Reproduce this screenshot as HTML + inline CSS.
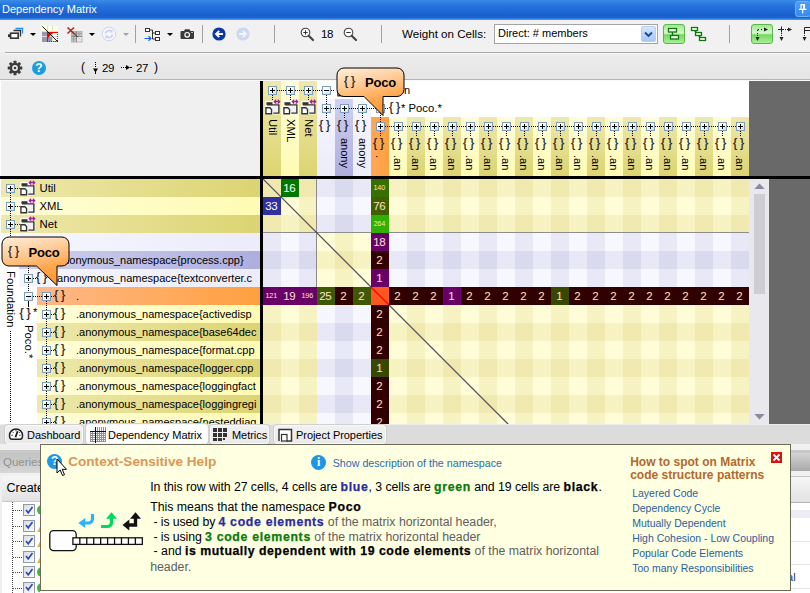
<!DOCTYPE html>
<html><head><meta charset="utf-8"><title>Dependency Matrix</title>
<style>
html,body{margin:0;padding:0;}
body{width:810px;height:593px;overflow:hidden;position:relative;background:#f0f0f0;font-family:"Liberation Sans",sans-serif;font-size:12px;color:#000;}
.abs{position:absolute;}
div,span,svg{box-sizing:border-box;}
#title{position:absolute;left:0;top:0;width:810px;height:20px;background:linear-gradient(#3a8ce8 0,#2775dd 25%,#1a60cd 75%,#1b63d0 88%,#2f80e4 94%,#5aa4f0 100%);color:#fff;font-size:11px;line-height:18px;padding-left:2px;}
#tb1{position:absolute;left:0;top:20px;width:810px;height:32px;background:#f1f1f1;}
#tb2{position:absolute;left:0;top:53px;width:810px;height:27px;background:linear-gradient(#ededed,#e4e4e4);}
.vsep{position:absolute;width:1px;background:#a0a0a0;top:25px;height:18px;}
.dd{position:absolute;width:0;height:0;border-left:3px solid transparent;border-right:3px solid transparent;border-top:3.5px solid #000;top:33px;}
.pb{position:absolute;width:9px;height:9px;border:1px solid #7b9ebd;background:linear-gradient(135deg,#fff 30%,#dcdad0);}
.pb:before{content:"";position:absolute;left:1px;top:3px;width:5px;height:1px;background:#000;}
.pb.p:after{content:"";position:absolute;left:3px;top:1px;width:1px;height:5px;background:#000;}
.hd{position:absolute;height:1px;background:repeating-linear-gradient(90deg,#000 0,#000 1px,transparent 1px,transparent 2px);}
.vd{position:absolute;width:1px;background:repeating-linear-gradient(180deg,#000 0,#000 1px,transparent 1px,transparent 2px);}
.ns{position:absolute;font-size:12.5px;line-height:13px;letter-spacing:2.8px;color:#1a1a1a;white-space:pre;font-weight:normal;-webkit-text-stroke:0.2px #1a1a1a;margin-left:-1px}
.rl{position:absolute;font-size:11px;line-height:18px;white-space:pre;color:#000;}
.vt{position:absolute;font-size:11px;line-height:14px;white-space:pre;transform-origin:0 0;transform:rotate(90deg);color:#000;}
.cell{position:absolute;width:18px;height:18px;text-align:center;line-height:18px;font-size:12px;letter-spacing:-0.3px;padding-right:1.5px;}
#tip b{letter-spacing:0.68px;-webkit-text-stroke:0.25px;}

</style></head>
<body>
<div id="title">Dependency Matrix</div>
<div class="abs" style="left:795px;top:1px;width:16px;height:16px;border:1px solid #70b0f8;border-radius:3px;background:linear-gradient(#4c9cf6,#3a8aee);"></div>
<svg class="abs" style="left:796px;top:2px" width="14" height="14" viewBox="0 0 14 14"><path d="M4.500 2.700h4.500M5 2.700v4.300M8.500 2.700v4.300M7.600 2.700v4.300M3 7.300h7.500M6.700 7.300v4.200" stroke="#fff" stroke-width="1.200" fill="none"/></svg>
<div id="tb1"></div>
<div class="abs" style="left:5px;top:52px;width:805px;height:1px;background:#a8a8a8"></div><div class="abs" style="left:5px;top:53px;width:805px;height:1px;background:#fafafa;z-index:1"></div>
<div id="tb2"></div>
<div class="abs" style="left:0;top:79px;width:810px;height:1px;background:#b4b4b4"></div><div class="abs" style="left:0;top:80px;width:810px;height:1px;background:#fafafa"></div>
<svg class="abs" style="left:7px;top:27px" width="18" height="14" viewBox="0 0 18 14">
<path d="M8.5 1.5h7v5" stroke="#1e90ff" stroke-width="1.3" fill="none"/>
<path d="M6.5 3.5h7v6" stroke="#333" stroke-width="1.3" fill="none"/>
<rect x="3.6" y="6.2" width="7.6" height="5" fill="#fff" stroke="#333" stroke-width="1.6"/>
<rect x="1" y="7.3" width="2.6" height="2.8" fill="#333"/>
</svg>
<div class="dd" style="left:30px"></div>
<svg class="abs" style="left:42px;top:26px" width="17" height="17" viewBox="0 0 17 17">
<g shape-rendering="crispEdges"><rect x="0" y="0" width="16" height="16" fill="#fdfde2"/>
<path d="M0 5h5v11h-5z M5 10h5v6h-5z M10 15h6v1h-6z" fill="#9898b0"/>
<path d="M5.500 0v16M10.500 0v16M0 5.500h16M0 10.500h16" stroke="#dcdcd4" stroke-width="1" fill="none"/>
<rect x="5" y="5.500" width="11" height="1.300" fill="#f00"/><rect x="5" y="5.500" width="1.300" height="10.500" fill="#f00"/>
<g fill="#f00"><rect x="15" y="8" width="1.300" height="1.200"/><rect x="15" y="10" width="1.300" height="1.200"/><rect x="15" y="12" width="1.300" height="1.200"/><rect x="15" y="14" width="1.300" height="1.200"/><rect x="7" y="15" width="1.200" height="1.300"/><rect x="9" y="15" width="1.200" height="1.300"/><rect x="11" y="15" width="1.200" height="1.300"/><rect x="13" y="15" width="1.200" height="1.300"/><rect x="15" y="15" width="1.200" height="1.300"/></g></g>
<path d="M6 6.500h5.500L6 12z" fill="#ff0000"/>
<path d="M0.300 0.300L15.700 15.700" stroke="#000" stroke-width="0.900"/>
<path d="M0.300 0.300L5.500 5.500" stroke="#9898b0" stroke-width="0"/>
</svg>
<svg class="abs" style="left:66px;top:26px" width="18" height="17" viewBox="0 0 18 17">
<rect x="5.500" y="5.500" width="10.500" height="10.500" fill="#c4c4c4" stroke="#b4b4b4" stroke-width="1"/>
<rect x="11" y="11" width="4.500" height="4.500" fill="#ececec"/>
<path d="M7.500 5.500v10.500M9.500 5.500v5M13 5.500v5M5.500 7.500h10.500M5.500 9.500h5M5.500 13h5" stroke="#a4a4a4" stroke-width="1" fill="none"/>
<path d="M10.500 5.500v10.500M5.500 10.500h10.500" stroke="#8c8c8c" stroke-width="1" fill="none"/>
<path d="M7 6.500L11.500 11" stroke="#222" stroke-width="1"/><path d="M11.500 11L15 14.500" stroke="#bbb" stroke-width="0.800"/>
<path d="M1.500 1.500L8 7.500M8 1.500L1.500 7.500" stroke="#b02818" stroke-width="1.700"/>
</svg>
<div class="dd" style="left:89px"></div>
<svg class="abs" style="left:101px;top:26px" width="16" height="16" viewBox="0 0 16 16">
<circle cx="8" cy="8" r="6.8" fill="#f4f6fc" stroke="#cfd6ea" stroke-width="1"/>
<path d="M4.5 7.5a3.5 3.5 0 0 1 6-2M11.5 8.5a3.5 3.5 0 0 1-6 2" stroke="#c4cdf0" stroke-width="1.5" fill="none"/>
<path d="M11.5 3.5v3h-3zM4.5 12.5v-3h3z" fill="#c4cdf0"/>
</svg>
<div class="dd" style="left:123px;border-top-color:#a0a0a0"></div>
<div class="vsep" style="left:135px"></div>
<svg class="abs" style="left:144px;top:27px" width="17" height="15" viewBox="0 0 17 15">
<rect x="1.5" y="1.5" width="4" height="3" fill="#fff" stroke="#333" stroke-width="1"/>
<rect x="11.5" y="4.5" width="4" height="3" fill="#fff" stroke="#333" stroke-width="1"/>
<rect x="11.5" y="10.500" width="4" height="3" fill="#fff" stroke="#333" stroke-width="1"/>
<path d="M5.500 3h3v9h3M8.500 6h3" stroke="#333" stroke-width="1" fill="none"/>
<path d="M0.500 11.500h6M4.500 9.300l2.400 2.200l-2.400 2.200" stroke="#1464d8" stroke-width="1.2" fill="none"/>
</svg>
<div class="dd" style="left:167px"></div>
<svg class="abs" style="left:180px;top:29px" width="15" height="11" viewBox="0 0 15 11">
<path d="M1.500 2h2.500l1-1.700h4.500l1 1.700h2.500a1 1 0 0 1 1 1v6a1 1 0 0 1-1 1h-11.500a1 1 0 0 1-1-1v-6a1 1 0 0 1 1-1z" fill="#3a3a3a"/>
<circle cx="7.200" cy="5.800" r="2.900" fill="#fff"/><circle cx="7.200" cy="5.800" r="1.700" fill="#3a3a3a"/>
<rect x="11.300" y="3" width="1.500" height="1" fill="#ddd"/>
</svg>
<div class="vsep" style="left:202px"></div>
<svg class="abs" style="left:212px;top:27px" width="14" height="14" viewBox="0 0 14 14">
<circle cx="7" cy="7" r="6.600" fill="#0a37a8"/>
<path d="M11 7H4.500M7.200 3.800L4 7l3.200 3.200" stroke="#fff" stroke-width="1.900" fill="none"/>
</svg>
<svg class="abs" style="left:236px;top:27px" width="14" height="14" viewBox="0 0 14 14">
<circle cx="7" cy="7" r="6.600" fill="#cdd8ee"/>
<path d="M3 7H9.500M6.800 3.800L10 7l-3.200 3.200" stroke="#f2f4fa" stroke-width="1.900" fill="none"/>
</svg>
<div class="vsep" style="left:274px"></div>
<svg class="abs" style="left:300px;top:27px" width="15" height="15" viewBox="0 0 15 15"><circle cx="5.500" cy="5.500" r="4.300" fill="#fff" stroke="#444" stroke-width="1.100"/><path d="M8.700 8.700L13 13" stroke="#444" stroke-width="2.200" stroke-linecap="round"/><path d="M3.300 5.500h4.400 M5.500 3.300v4.400" stroke="#333" stroke-width="1"/></svg>
<div class="abs" style="left:321px;top:26px;font-size:11.500px;letter-spacing:-0.300px;line-height:16px;">18</div>
<svg class="abs" style="left:343px;top:27px" width="15" height="15" viewBox="0 0 15 15"><circle cx="5.500" cy="5.500" r="4.300" fill="#fff" stroke="#444" stroke-width="1.100"/><path d="M8.700 8.700L13 13" stroke="#444" stroke-width="2.200" stroke-linecap="round"/><path d="M3.300 5.500h4.400" stroke="#333" stroke-width="1"/></svg>
<div class="vsep" style="left:381px"></div>
<div class="abs" style="left:402px;top:26px;font-size:11.600px;line-height:15px;">Weight on Cells:</div>
<div class="abs" style="left:494px;top:24px;width:164px;height:20px;border:1px solid #a4a4a4;background:#fff;font-size:11px;line-height:17px;padding-left:3px;">Direct: # members</div>
<div class="abs" style="left:641px;top:26px;width:15px;height:16px;border:1px solid #b4cdf4;border-radius:2px;background:linear-gradient(#d4e6ff,#a8c8fa);"></div>
<svg class="abs" style="left:644px;top:31px" width="9" height="7" viewBox="0 0 9 7"><path d="M1 1.500L4.500 5L8 1.500" stroke="#1448a0" stroke-width="1.900" fill="none"/></svg>
<div class="abs" style="left:663px;top:24px;width:22px;height:20px;border:1px solid #58b848;border-radius:3px;background:linear-gradient(#a0e890,#d8f8d0 45%,#78d860 55%,#a8f098);"></div>
<svg class="abs" style="left:667px;top:27px" width="15" height="14" viewBox="0 0 15 14">
<rect x="1.500" y="1.500" width="8" height="3.500" fill="#fff" stroke="#0a7a0a" stroke-width="1.300"/>
<rect x="3.500" y="8.500" width="8" height="3.500" fill="#fff" stroke="#0a7a0a" stroke-width="1.300"/>
<path d="M5.500 5v3.500" stroke="#0a7a0a" stroke-width="1.300"/>
</svg>
<svg class="abs" style="left:690px;top:26px" width="17" height="16" viewBox="0 0 17 16">
<rect x="1.500" y="1.500" width="6" height="3" fill="#fff" stroke="#0a7a0a" stroke-width="1.300"/>
<rect x="5.500" y="6.500" width="6" height="3" fill="#fff" stroke="#0a7a0a" stroke-width="1.300"/>
<rect x="9.500" y="11.500" width="6" height="3" fill="#fff" stroke="#0a7a0a" stroke-width="1.300"/>
<path d="M4.500 4.500l2 2M8.500 9.500l2 2" stroke="#0a7a0a" stroke-width="1.300"/>
</svg>
<div class="vsep" style="left:729px"></div>
<div class="abs" style="left:751px;top:24px;width:22px;height:20px;border:1px solid #58b848;border-radius:3px;background:linear-gradient(#a0e890,#d8f8d0 45%,#78d860 55%,#a8f098);"></div>
<svg class="abs" style="left:753px;top:26px" width="19" height="17" viewBox="0 0 19 17">
<path d="M4.500 12v-5M4.500 5v-1.500h1.500M8 3.500h2" stroke="#222" stroke-width="1" stroke-dasharray="1 1"/>
<path d="M11 1.500l4 2l-4 2z M2.500 11h4l-2 4z" fill="#222"/>
</svg>
<svg class="abs" style="left:777px;top:26px" width="19" height="17" viewBox="0 0 19 17">
<path d="M1 3.500h6M4.500 0.500v6" stroke="#222" stroke-width="1"/>
<path d="M4.500 7v4M8 3.500h3" stroke="#222" stroke-width="1" stroke-dasharray="1 1"/>
<path d="M11 1.500l4 2l-4 2z M2.500 11h4l-2 4z" fill="#222"/>
</svg>
<svg class="abs" style="left:801px;top:26px" width="9" height="17" viewBox="0 0 9 17">
<path d="M3.500 7v-5.500h6M3.500 4.500h6" stroke="#222" stroke-width="1" fill="none"/>
<path d="M3.500 7v4" stroke="#222" stroke-width="1" stroke-dasharray="1 1"/>
<path d="M1.500 11h4l-2 4z" fill="#222"/>
</svg>
<svg class="abs" style="left:7px;top:60px" width="16" height="16" viewBox="-8 -8 16 16">
<g fill="#3c3c3c">
<circle r="5.300"/>
<g id="gt"><rect x="-1.500" y="-7.300" width="3" height="3.500" rx="0.500"/><rect x="-1.500" y="3.800" width="3" height="3.500" rx="0.500"/></g>
<use href="#gt" transform="rotate(45)"/><use href="#gt" transform="rotate(90)"/><use href="#gt" transform="rotate(135)"/>
</g>
<circle r="2.900" fill="#ebebeb"/><circle r="1.300" fill="#3c3c3c"/>
</svg>
<div class="abs" style="left:32px;top:61px;width:14px;height:14px;border-radius:7px;background:#1e9ae0;color:#fff;font-weight:bold;font-size:12px;line-height:14px;text-align:center;">?</div>
<div class="abs" style="left:81px;top:60px;font-size:12px;line-height:15px;white-space:pre;">(</div>
<div class="abs" style="left:102px;top:60px;font-size:11.500px;letter-spacing:-0.300px;line-height:16px;">29</div>
<div class="abs" style="left:136px;top:60px;font-size:11.500px;letter-spacing:-0.300px;line-height:16px;">27</div>
<div class="abs" style="left:154px;top:60px;font-size:12px;line-height:15px;">)</div>
<svg class="abs" style="left:91px;top:61px" width="9" height="14" viewBox="0 0 9 14"><path d="M4.500 1v6" stroke="#000" stroke-width="1" stroke-dasharray="1 1"/><path d="M2 7.500h5l-2.500 4z" fill="#000"/><path d="M4.500 11v2" stroke="#000"/></svg>
<svg class="abs" style="left:121px;top:63px" width="12" height="9" viewBox="0 0 12 9"><path d="M0 4.500h5" stroke="#000" stroke-width="1" stroke-dasharray="1 1"/><path d="M5 2l4 2.500l-4 2.500z" fill="#000"/><path d="M9 4.500h2" stroke="#000"/></svg>
<div class="abs" style="left:0;top:81px;width:810px;height:343px;background:#fff;overflow:hidden" id="mx">
<div class="abs" style="left:1px;top:0;width:259px;height:95px;background:#f0f0f0"></div>
<div class="abs" style="left:749px;top:0;width:61px;height:343px;background:#696969"></div>
<div class="abs" style="left:263px;top:0px;width:18px;height:95px;background:linear-gradient(#eee8ac,#dcd472)"></div>
<div class="abs" style="left:281px;top:0px;width:18px;height:95px;background:linear-gradient(#fffdd8,#fffbb4)"></div>
<div class="abs" style="left:299px;top:0px;width:18px;height:95px;background:linear-gradient(#eee8ac,#dcd472)"></div>
<div class="abs" style="left:317px;top:18px;width:18px;height:77px;background:linear-gradient(#f6f6ff,#ececfa)"></div>
<div class="abs" style="left:335px;top:18px;width:18px;height:77px;background:linear-gradient(#d0d0ee,#aeaede)"></div>
<div class="abs" style="left:353px;top:18px;width:18px;height:77px;background:linear-gradient(#f6f6ff,#ececfa)"></div>
<div class="abs" style="left:371px;top:36px;width:18px;height:59px;background:linear-gradient(90deg,#ffa858,#ffa040)"></div>
<div class="abs" style="left:389px;top:36px;width:18px;height:59px;background:linear-gradient(#fffdd8,#fffbb4)"></div>
<div class="abs" style="left:407px;top:36px;width:18px;height:59px;background:linear-gradient(#eee8ac,#dcd472)"></div>
<div class="abs" style="left:425px;top:36px;width:18px;height:59px;background:linear-gradient(#fffdd8,#fffbb4)"></div>
<div class="abs" style="left:443px;top:36px;width:18px;height:59px;background:linear-gradient(#eee8ac,#dcd472)"></div>
<div class="abs" style="left:461px;top:36px;width:18px;height:59px;background:linear-gradient(#fffdd8,#fffbb4)"></div>
<div class="abs" style="left:479px;top:36px;width:18px;height:59px;background:linear-gradient(#eee8ac,#dcd472)"></div>
<div class="abs" style="left:497px;top:36px;width:18px;height:59px;background:linear-gradient(#fffdd8,#fffbb4)"></div>
<div class="abs" style="left:515px;top:36px;width:18px;height:59px;background:linear-gradient(#eee8ac,#dcd472)"></div>
<div class="abs" style="left:533px;top:36px;width:18px;height:59px;background:linear-gradient(#fffdd8,#fffbb4)"></div>
<div class="abs" style="left:551px;top:36px;width:18px;height:59px;background:linear-gradient(#eee8ac,#dcd472)"></div>
<div class="abs" style="left:569px;top:36px;width:18px;height:59px;background:linear-gradient(#fffdd8,#fffbb4)"></div>
<div class="abs" style="left:587px;top:36px;width:18px;height:59px;background:linear-gradient(#eee8ac,#dcd472)"></div>
<div class="abs" style="left:605px;top:36px;width:18px;height:59px;background:linear-gradient(#fffdd8,#fffbb4)"></div>
<div class="abs" style="left:623px;top:36px;width:18px;height:59px;background:linear-gradient(#eee8ac,#dcd472)"></div>
<div class="abs" style="left:641px;top:36px;width:18px;height:59px;background:linear-gradient(#fffdd8,#fffbb4)"></div>
<div class="abs" style="left:659px;top:36px;width:18px;height:59px;background:linear-gradient(#eee8ac,#dcd472)"></div>
<div class="abs" style="left:677px;top:36px;width:18px;height:59px;background:linear-gradient(#fffdd8,#fffbb4)"></div>
<div class="abs" style="left:695px;top:36px;width:18px;height:59px;background:linear-gradient(#eee8ac,#dcd472)"></div>
<div class="abs" style="left:713px;top:36px;width:18px;height:59px;background:linear-gradient(#fffdd8,#fffbb4)"></div>
<div class="abs" style="left:731px;top:36px;width:18px;height:59px;background:linear-gradient(#eee8ac,#dcd472)"></div>
<div class="hd" style="left:273px;top:9px;width:62px"></div>
<div class="vd" style="left:272px;top:14px;height:6px"></div><div class="pb p" style="left:268px;top:5px"></div><svg class="abs" style="left:263.5px;top:17.8px" width="17" height="16" viewBox="0 0 16 15"><path d="M2.300 3h5.700v2.500H14V13.300H1.800V8.200H2.300z" fill="#fff" stroke="#fff" stroke-width="2.600" stroke-linejoin="round" opacity="0.850"/><path d="M2.800 5.500H14V13.300H8.800" fill="#f2f2f2"/><path d="M2.300 3h5.700v2.500h-5.700z" fill="#333"/><path d="M2.800 5.500H14V13.300H8.800" stroke="#333" stroke-width="1.300" fill="none"/><path d="M1.800 8.200h3.700l1.600 1.600v4h-5.300z" fill="#fff" stroke="#333" stroke-width="1.300"/><path d="M9.800 2.500h4.800M11.500 0.700L9.700 2.500l1.800 1.800M13 0.700l1.800 1.800L13 4.300" stroke="#a41ea4" stroke-width="1.200" fill="none"/></svg><div class="vt" style="left:280px;top:38px;font-size:11.300px">Util</div>
<div class="vd" style="left:290px;top:14px;height:6px"></div><div class="pb p" style="left:286px;top:5px"></div><svg class="abs" style="left:281.5px;top:17.8px" width="17" height="16" viewBox="0 0 16 15"><path d="M2.300 3h5.700v2.500H14V13.300H1.800V8.200H2.300z" fill="#fff" stroke="#fff" stroke-width="2.600" stroke-linejoin="round" opacity="0.850"/><path d="M2.800 5.500H14V13.300H8.800" fill="#f2f2f2"/><path d="M2.300 3h5.700v2.500h-5.700z" fill="#333"/><path d="M2.800 5.500H14V13.300H8.800" stroke="#333" stroke-width="1.300" fill="none"/><path d="M1.800 8.200h3.700l1.600 1.600v4h-5.300z" fill="#fff" stroke="#333" stroke-width="1.300"/><path d="M9.800 2.500h4.800M11.500 0.700L9.700 2.500l1.800 1.800M13 0.700l1.800 1.800L13 4.300" stroke="#a41ea4" stroke-width="1.200" fill="none"/></svg><div class="vt" style="left:298px;top:38px;font-size:11.300px">XML</div>
<div class="vd" style="left:308px;top:14px;height:6px"></div><div class="pb p" style="left:304px;top:5px"></div><svg class="abs" style="left:299.5px;top:17.8px" width="17" height="16" viewBox="0 0 16 15"><path d="M2.300 3h5.700v2.500H14V13.300H1.800V8.200H2.300z" fill="#fff" stroke="#fff" stroke-width="2.600" stroke-linejoin="round" opacity="0.850"/><path d="M2.800 5.500H14V13.300H8.800" fill="#f2f2f2"/><path d="M2.300 3h5.700v2.500h-5.700z" fill="#333"/><path d="M2.800 5.500H14V13.300H8.800" stroke="#333" stroke-width="1.300" fill="none"/><path d="M1.800 8.200h3.700l1.600 1.600v4h-5.300z" fill="#fff" stroke="#333" stroke-width="1.300"/><path d="M9.800 2.500h4.800M11.500 0.700L9.700 2.500l1.800 1.800M13 0.700l1.800 1.800L13 4.300" stroke="#a41ea4" stroke-width="1.200" fill="none"/></svg><div class="vt" style="left:316px;top:38px;font-size:11.300px">Net</div>
<div class="vd" style="left:326px;top:14px;height:10px"></div><div class="pb" style="left:322px;top:5px"></div><svg class="abs" style="left:335.5px;top:0.3px" width="17" height="16" viewBox="0 0 16 15"><path d="M2.300 3h5.700v2.500H14V13.300H1.800V8.200H2.300z" fill="#fff" stroke="#fff" stroke-width="2.600" stroke-linejoin="round" opacity="0.850"/><path d="M2.800 5.500H14V13.300H8.800" fill="#f2f2f2"/><path d="M2.300 3h5.700v2.500h-5.700z" fill="#333"/><path d="M2.800 5.500H14V13.300H8.800" stroke="#333" stroke-width="1.300" fill="none"/><path d="M1.800 8.200h3.700l1.600 1.600v4h-5.300z" fill="#fff" stroke="#333" stroke-width="1.300"/></svg><div class="rl" style="left:355px;top:0px;color:#000">Foundation</div>
<div class="hd" style="left:327px;top:27px;width:62px"></div>
<div class="vd" style="left:326px;top:32px;height:6px"></div><div class="pb p" style="left:322px;top:23px"></div><div class="ns" style="left:320px;top:38px">{}</div><div class="vd" style="left:344px;top:32px;height:6px"></div><div class="pb p" style="left:340px;top:23px"></div><div class="ns" style="left:338px;top:38px">{}</div><div class="vt" style="left:352px;top:57px">anony</div>
<div class="vd" style="left:362px;top:32px;height:6px"></div><div class="pb p" style="left:358px;top:23px"></div><div class="ns" style="left:356px;top:38px">{}</div><div class="vt" style="left:370px;top:57px">anony</div>
<div class="vd" style="left:380px;top:32px;height:10px"></div><div class="pb" style="left:376px;top:23px"></div><div class="ns" style="left:390px;top:20px">{}</div><div class="rl" style="left:401px;top:18px;font-size:11.300px">* Poco.*</div>
<div class="hd" style="left:381px;top:45px;width:360px"></div>
<div class="vd" style="left:380px;top:50px;height:6px"></div><div class="pb p" style="left:376px;top:41px"></div><div class="ns" style="left:374px;top:56px">{}</div><div class="vt" style="left:387px;top:74px">.</div>
<div class="vd" style="left:398px;top:50px;height:6px"></div><div class="pb p" style="left:394px;top:41px"></div><div class="ns" style="left:392px;top:56px">{}</div><div class="vt" style="left:405px;top:74px">.an</div>
<div class="vd" style="left:416px;top:50px;height:6px"></div><div class="pb p" style="left:412px;top:41px"></div><div class="ns" style="left:410px;top:56px">{}</div><div class="vt" style="left:423px;top:74px">.an</div>
<div class="vd" style="left:434px;top:50px;height:6px"></div><div class="pb p" style="left:430px;top:41px"></div><div class="ns" style="left:428px;top:56px">{}</div><div class="vt" style="left:441px;top:74px">.an</div>
<div class="vd" style="left:452px;top:50px;height:6px"></div><div class="pb p" style="left:448px;top:41px"></div><div class="ns" style="left:446px;top:56px">{}</div><div class="vt" style="left:459px;top:74px">.an</div>
<div class="vd" style="left:470px;top:50px;height:6px"></div><div class="pb p" style="left:466px;top:41px"></div><div class="ns" style="left:464px;top:56px">{}</div><div class="vt" style="left:477px;top:74px">.an</div>
<div class="vd" style="left:488px;top:50px;height:6px"></div><div class="pb p" style="left:484px;top:41px"></div><div class="ns" style="left:482px;top:56px">{}</div><div class="vt" style="left:495px;top:74px">.an</div>
<div class="vd" style="left:506px;top:50px;height:6px"></div><div class="pb p" style="left:502px;top:41px"></div><div class="ns" style="left:500px;top:56px">{}</div><div class="vt" style="left:513px;top:74px">.an</div>
<div class="vd" style="left:524px;top:50px;height:6px"></div><div class="pb p" style="left:520px;top:41px"></div><div class="ns" style="left:518px;top:56px">{}</div><div class="vt" style="left:531px;top:74px">.an</div>
<div class="vd" style="left:542px;top:50px;height:6px"></div><div class="pb p" style="left:538px;top:41px"></div><div class="ns" style="left:536px;top:56px">{}</div><div class="vt" style="left:549px;top:74px">.an</div>
<div class="vd" style="left:560px;top:50px;height:6px"></div><div class="pb p" style="left:556px;top:41px"></div><div class="ns" style="left:554px;top:56px">{}</div><div class="vt" style="left:567px;top:74px">.an</div>
<div class="vd" style="left:578px;top:50px;height:6px"></div><div class="pb p" style="left:574px;top:41px"></div><div class="ns" style="left:572px;top:56px">{}</div><div class="vt" style="left:585px;top:74px">.an</div>
<div class="vd" style="left:596px;top:50px;height:6px"></div><div class="pb p" style="left:592px;top:41px"></div><div class="ns" style="left:590px;top:56px">{}</div><div class="vt" style="left:603px;top:74px">.an</div>
<div class="vd" style="left:614px;top:50px;height:6px"></div><div class="pb p" style="left:610px;top:41px"></div><div class="ns" style="left:608px;top:56px">{}</div><div class="vt" style="left:621px;top:74px">.an</div>
<div class="vd" style="left:632px;top:50px;height:6px"></div><div class="pb p" style="left:628px;top:41px"></div><div class="ns" style="left:626px;top:56px">{}</div><div class="vt" style="left:639px;top:74px">.an</div>
<div class="vd" style="left:650px;top:50px;height:6px"></div><div class="pb p" style="left:646px;top:41px"></div><div class="ns" style="left:644px;top:56px">{}</div><div class="vt" style="left:657px;top:74px">.an</div>
<div class="vd" style="left:668px;top:50px;height:6px"></div><div class="pb p" style="left:664px;top:41px"></div><div class="ns" style="left:662px;top:56px">{}</div><div class="vt" style="left:675px;top:74px">.an</div>
<div class="vd" style="left:686px;top:50px;height:6px"></div><div class="pb p" style="left:682px;top:41px"></div><div class="ns" style="left:680px;top:56px">{}</div><div class="vt" style="left:693px;top:74px">.an</div>
<div class="vd" style="left:704px;top:50px;height:6px"></div><div class="pb p" style="left:700px;top:41px"></div><div class="ns" style="left:698px;top:56px">{}</div><div class="vt" style="left:711px;top:74px">.an</div>
<div class="vd" style="left:722px;top:50px;height:6px"></div><div class="pb p" style="left:718px;top:41px"></div><div class="ns" style="left:716px;top:56px">{}</div><div class="vt" style="left:729px;top:74px">.an</div>
<div class="vd" style="left:740px;top:50px;height:6px"></div><div class="pb p" style="left:736px;top:41px"></div><div class="ns" style="left:734px;top:56px">{}</div><div class="vt" style="left:747px;top:74px">.an</div>
<div class="abs" style="left:1px;top:98px;width:259px;height:18px;background:linear-gradient(90deg,#eee8ac,#dcd472)"></div>
<div class="abs" style="left:1px;top:116px;width:259px;height:18px;background:linear-gradient(90deg,#fffdd8,#fffbb4)"></div>
<div class="abs" style="left:1px;top:134px;width:259px;height:18px;background:linear-gradient(90deg,#eee8ac,#dcd472)"></div>
<div class="abs" style="left:19px;top:152px;width:241px;height:18px;background:linear-gradient(90deg,#f6f6ff,#ececfa)"></div>
<div class="abs" style="left:19px;top:170px;width:241px;height:18px;background:linear-gradient(90deg,#d0d0ee,#aeaede)"></div>
<div class="abs" style="left:19px;top:188px;width:241px;height:18px;background:linear-gradient(90deg,#f6f6ff,#ececfa)"></div>
<div class="abs" style="left:37px;top:206px;width:223px;height:18px;background:linear-gradient(90deg,#ffb888,#ffa040)"></div>
<div class="abs" style="left:37px;top:224px;width:223px;height:18px;background:linear-gradient(90deg,#fffdd8,#fffbb4)"></div>
<div class="abs" style="left:37px;top:242px;width:223px;height:18px;background:linear-gradient(90deg,#eee8ac,#dcd472)"></div>
<div class="abs" style="left:37px;top:260px;width:223px;height:18px;background:linear-gradient(90deg,#fffdd8,#fffbb4)"></div>
<div class="abs" style="left:37px;top:278px;width:223px;height:18px;background:linear-gradient(90deg,#eee8ac,#dcd472)"></div>
<div class="abs" style="left:37px;top:296px;width:223px;height:18px;background:linear-gradient(90deg,#fffdd8,#fffbb4)"></div>
<div class="abs" style="left:37px;top:314px;width:223px;height:18px;background:linear-gradient(90deg,#eee8ac,#dcd472)"></div>
<div class="abs" style="left:37px;top:332px;width:223px;height:18px;background:linear-gradient(90deg,#fffdd8,#fffbb4)"></div>
<div class="vd" style="left:10px;top:112px;height:230px"></div>
<div class="hd" style="left:15px;top:107px;width:5px"></div><div class="pb p" style="left:6px;top:103px"></div><svg class="abs" style="left:18.5px;top:99.3px" width="17" height="16" viewBox="0 0 16 15"><path d="M2.300 3h5.700v2.500H14V13.300H1.800V8.200H2.300z" fill="#fff" stroke="#fff" stroke-width="2.600" stroke-linejoin="round" opacity="0.850"/><path d="M2.800 5.500H14V13.300H8.800" fill="#f2f2f2"/><path d="M2.300 3h5.700v2.500h-5.700z" fill="#333"/><path d="M2.800 5.500H14V13.300H8.800" stroke="#333" stroke-width="1.300" fill="none"/><path d="M1.800 8.200h3.700l1.600 1.600v4h-5.300z" fill="#fff" stroke="#333" stroke-width="1.300"/><path d="M9.800 2.500h4.800M11.500 0.700L9.700 2.500l1.800 1.800M13 0.700l1.800 1.800L13 4.300" stroke="#a41ea4" stroke-width="1.200" fill="none"/></svg><div class="rl" style="left:39.500px;top:98px;font-size:11.300px">Util</div>
<div class="hd" style="left:15px;top:125px;width:5px"></div><div class="pb p" style="left:6px;top:121px"></div><svg class="abs" style="left:18.5px;top:117.3px" width="17" height="16" viewBox="0 0 16 15"><path d="M2.300 3h5.700v2.500H14V13.300H1.800V8.200H2.300z" fill="#fff" stroke="#fff" stroke-width="2.600" stroke-linejoin="round" opacity="0.850"/><path d="M2.800 5.500H14V13.300H8.800" fill="#f2f2f2"/><path d="M2.300 3h5.700v2.500h-5.700z" fill="#333"/><path d="M2.800 5.500H14V13.300H8.800" stroke="#333" stroke-width="1.300" fill="none"/><path d="M1.800 8.200h3.700l1.600 1.600v4h-5.300z" fill="#fff" stroke="#333" stroke-width="1.300"/><path d="M9.800 2.500h4.800M11.500 0.700L9.700 2.500l1.800 1.800M13 0.700l1.800 1.800L13 4.300" stroke="#a41ea4" stroke-width="1.200" fill="none"/></svg><div class="rl" style="left:39.500px;top:116px;font-size:11.300px">XML</div>
<div class="hd" style="left:15px;top:143px;width:5px"></div><div class="pb p" style="left:6px;top:139px"></div><svg class="abs" style="left:18.5px;top:135.3px" width="17" height="16" viewBox="0 0 16 15"><path d="M2.300 3h5.700v2.500H14V13.300H1.800V8.200H2.300z" fill="#fff" stroke="#fff" stroke-width="2.600" stroke-linejoin="round" opacity="0.850"/><path d="M2.800 5.500H14V13.300H8.800" fill="#f2f2f2"/><path d="M2.300 3h5.700v2.500h-5.700z" fill="#333"/><path d="M2.800 5.500H14V13.300H8.800" stroke="#333" stroke-width="1.300" fill="none"/><path d="M1.800 8.200h3.700l1.600 1.600v4h-5.300z" fill="#fff" stroke="#333" stroke-width="1.300"/><path d="M9.800 2.500h4.800M11.500 0.700L9.700 2.500l1.800 1.800M13 0.700l1.800 1.800L13 4.300" stroke="#a41ea4" stroke-width="1.200" fill="none"/></svg><div class="rl" style="left:39.500px;top:134px;font-size:11.300px">Net</div>
<div class="abs" style="left:1px;top:159px;width:18px;height:90px;background:#fff"></div><div class="vt" style="left:17.500px;top:190px;font-size:11.300px">Foundation</div>
<div class="vd" style="left:28px;top:159px;height:70px"></div>
<div class="hd" style="left:33px;top:161px;width:5px"></div><div class="pb p" style="left:24px;top:157px"></div><div class="rl" style="left:54px;top:152px"></div>
<div class="hd" style="left:33px;top:179px;width:5px"></div><div class="pb p" style="left:24px;top:175px"></div><div class="ns" style="left:37px;top:172px">{}</div><div class="rl" style="left:54px;top:170px">.anonymous_namespace{process.cpp}</div>
<div class="hd" style="left:33px;top:197px;width:5px"></div><div class="pb p" style="left:24px;top:193px"></div><div class="ns" style="left:37px;top:190px">{}</div><div class="rl" style="left:54px;top:188px">.anonymous_namespace{textconverter.c</div>
<div class="hd" style="left:33px;top:215px;width:10px"></div><div class="pb" style="left:24px;top:211px"></div><div class="vd" style="left:28px;top:220px;height:6px"></div><div class="ns" style="left:20.500px;top:226px">{}</div><div class="rl" style="left:33px;top:222px;font-size:11.300px">*</div><div class="vt" style="left:35.500px;top:244px;font-size:11.300px">Poco.*</div>
<div class="vd" style="left:46px;top:220px;height:130px"></div>
<div class="hd" style="left:51px;top:215px;width:5px"></div><div class="pb p" style="left:42px;top:211px"></div><div class="ns" style="left:55px;top:208px">{}</div><div class="rl" style="left:76px;top:206px">.</div>
<div class="hd" style="left:51px;top:233px;width:5px"></div><div class="pb p" style="left:42px;top:229px"></div><div class="ns" style="left:55px;top:226px">{}</div><div class="rl" style="left:76px;top:224px">.anonymous_namespace{activedisp</div>
<div class="hd" style="left:51px;top:251px;width:5px"></div><div class="pb p" style="left:42px;top:247px"></div><div class="ns" style="left:55px;top:244px">{}</div><div class="rl" style="left:76px;top:242px">.anonymous_namespace{base64dec</div>
<div class="hd" style="left:51px;top:269px;width:5px"></div><div class="pb p" style="left:42px;top:265px"></div><div class="ns" style="left:55px;top:262px">{}</div><div class="rl" style="left:76px;top:260px">.anonymous_namespace{format.cpp</div>
<div class="hd" style="left:51px;top:287px;width:5px"></div><div class="pb p" style="left:42px;top:283px"></div><div class="ns" style="left:55px;top:280px">{}</div><div class="rl" style="left:76px;top:278px">.anonymous_namespace{logger.cpp</div>
<div class="hd" style="left:51px;top:305px;width:5px"></div><div class="pb p" style="left:42px;top:301px"></div><div class="ns" style="left:55px;top:298px">{}</div><div class="rl" style="left:76px;top:296px">.anonymous_namespace{loggingfact</div>
<div class="hd" style="left:51px;top:323px;width:5px"></div><div class="pb p" style="left:42px;top:319px"></div><div class="ns" style="left:55px;top:316px">{}</div><div class="rl" style="left:76px;top:314px">.anonymous_namespace{loggingregi</div>
<div class="hd" style="left:51px;top:341px;width:5px"></div><div class="pb p" style="left:42px;top:337px"></div><div class="ns" style="left:55px;top:334px">{}</div><div class="rl" style="left:76px;top:332px">.anonymous_namespace{nesteddiag</div>
<div class="abs" style="left:263px;top:98px;width:486px;height:245px;overflow:hidden;background:#fffdd7" id="cells">
<div class="abs" style="left:0px;top:0px;width:54px;height:54px;background:repeating-linear-gradient(90deg,rgba(175,153,15,0.1) 0,rgba(175,153,15,0.1) 18px,transparent 18px,transparent 36px) 0px 0/36px 36px,repeating-linear-gradient(180deg,rgba(175,153,15,0.1) 0,rgba(175,153,15,0.1) 18px,transparent 18px,transparent 36px) 0 0px/36px 36px,#fffdd7;"></div>
<div class="abs" style="left:126px;top:0px;width:360px;height:54px;background:repeating-linear-gradient(90deg,rgba(175,153,15,0.1) 0,rgba(175,153,15,0.1) 18px,transparent 18px,transparent 36px) 18px 0/36px 36px,repeating-linear-gradient(180deg,rgba(175,153,15,0.1) 0,rgba(175,153,15,0.1) 18px,transparent 18px,transparent 36px) 0 0px/36px 36px,#fffdd7;"></div>
<div class="abs" style="left:54px;top:54px;width:54px;height:54px;background:repeating-linear-gradient(90deg,rgba(175,153,15,0.1) 0,rgba(175,153,15,0.1) 18px,transparent 18px,transparent 36px) 18px 0/36px 36px,repeating-linear-gradient(180deg,rgba(175,153,15,0.1) 0,rgba(175,153,15,0.1) 18px,transparent 18px,transparent 36px) 0 18px/36px 36px,#fffdd7;"></div>
<div class="abs" style="left:0px;top:126px;width:54px;height:119px;background:repeating-linear-gradient(90deg,rgba(175,153,15,0.1) 0,rgba(175,153,15,0.1) 18px,transparent 18px,transparent 36px) 0px 0/36px 36px,repeating-linear-gradient(180deg,rgba(175,153,15,0.1) 0,rgba(175,153,15,0.1) 18px,transparent 18px,transparent 36px) 0 18px/36px 36px,#fffdd7;"></div>
<div class="abs" style="left:126px;top:126px;width:360px;height:119px;background:repeating-linear-gradient(90deg,rgba(175,153,15,0.1) 0,rgba(175,153,15,0.1) 18px,transparent 18px,transparent 36px) 18px 0/36px 36px,repeating-linear-gradient(180deg,rgba(175,153,15,0.1) 0,rgba(175,153,15,0.1) 18px,transparent 18px,transparent 36px) 0 18px/36px 36px,#fffdd7;"></div>
<div class="abs" style="left:54px;top:0px;width:54px;height:54px;background:repeating-linear-gradient(90deg,rgba(97,97,165,0.1) 0,rgba(97,97,165,0.1) 18px,transparent 18px,transparent 36px) 18px 0/36px 36px,repeating-linear-gradient(180deg,rgba(97,97,165,0.1) 0,rgba(97,97,165,0.1) 18px,transparent 18px,transparent 36px) 0 0px/36px 36px,#f7f7ff;"></div>
<div class="abs" style="left:0px;top:54px;width:54px;height:54px;background:repeating-linear-gradient(90deg,rgba(97,97,165,0.1) 0,rgba(97,97,165,0.1) 18px,transparent 18px,transparent 36px) 0px 0/36px 36px,repeating-linear-gradient(180deg,rgba(97,97,165,0.1) 0,rgba(97,97,165,0.1) 18px,transparent 18px,transparent 36px) 0 18px/36px 36px,#f7f7ff;"></div>
<div class="abs" style="left:126px;top:54px;width:360px;height:54px;background:repeating-linear-gradient(90deg,rgba(97,97,165,0.1) 0,rgba(97,97,165,0.1) 18px,transparent 18px,transparent 36px) 18px 0/36px 36px,repeating-linear-gradient(180deg,rgba(97,97,165,0.1) 0,rgba(97,97,165,0.1) 18px,transparent 18px,transparent 36px) 0 18px/36px 36px,#f7f7ff;"></div>
<div class="abs" style="left:54px;top:126px;width:54px;height:119px;background:repeating-linear-gradient(90deg,rgba(97,97,165,0.1) 0,rgba(97,97,165,0.1) 18px,transparent 18px,transparent 36px) 18px 0/36px 36px,repeating-linear-gradient(180deg,rgba(97,97,165,0.1) 0,rgba(97,97,165,0.1) 18px,transparent 18px,transparent 36px) 0 18px/36px 36px,#f7f7ff;"></div>
<div class="abs" style="left:53px;top:0px;width:1px;height:108px;background:#8c8c8c;"></div>
<div class="abs" style="left:0px;top:53px;width:486px;height:1px;background:#8c8c8c;"></div>
<svg class="abs" style="left:0;top:0" width="486" height="245"><path d="M0 0L245 245" stroke="#505058" stroke-width="1.200"/></svg>
<div class="cell" style="left:18px;top:0px;background:#007800;color:#fff;font-size:11.5px">16</div>
<div class="cell" style="left:0px;top:18px;background:#3030a0;color:#fff;font-size:11.5px">33</div>
<div class="cell" style="left:108px;top:0px;background:#387000;color:#ffe0a0;font-size:7.3px">140</div>
<div class="cell" style="left:108px;top:18px;background:#406000;color:#ffe0c0;font-size:11.5px">76</div>
<div class="cell" style="left:108px;top:36px;background:#30b000;color:#ffe0a0;font-size:7.3px">264</div>
<div class="cell" style="left:108px;top:54px;background:#680068;color:#ffe0d0;font-size:11.5px">18</div>
<div class="cell" style="left:108px;top:72px;background:#300000;color:#ffe0d0;font-size:11.5px">2</div>
<div class="cell" style="left:108px;top:90px;background:#680068;color:#ffe0d0;font-size:11.5px">1</div>
<div class="cell" style="left:108px;top:126px;background:#300000;color:#ffe0d0;font-size:11.5px">2</div>
<div class="cell" style="left:108px;top:144px;background:#300000;color:#ffe0d0;font-size:11.5px">2</div>
<div class="cell" style="left:108px;top:162px;background:#300000;color:#ffe0d0;font-size:11.5px">2</div>
<div class="cell" style="left:108px;top:180px;background:#384800;color:#ffe0d0;font-size:11.5px">1</div>
<div class="cell" style="left:108px;top:198px;background:#300000;color:#ffe0d0;font-size:11.5px">2</div>
<div class="cell" style="left:108px;top:216px;background:#300000;color:#ffe0d0;font-size:11.5px">2</div>
<div class="cell" style="left:108px;top:234px;background:#300000;color:#ffe0d0;font-size:11.5px">2</div>
<div class="cell" style="left:0px;top:108px;background:#680068;color:#ffe0d0;font-size:7.3px">121</div>
<div class="cell" style="left:18px;top:108px;background:#680068;color:#ffe0d0;font-size:11.5px">19</div>
<div class="cell" style="left:36px;top:108px;background:#680068;color:#ffe0d0;font-size:7.3px">196</div>
<div class="cell" style="left:54px;top:108px;background:#405800;color:#ffe0d0;font-size:11.5px">25</div>
<div class="cell" style="left:72px;top:108px;background:#300000;color:#ffe0d0;font-size:11.5px">2</div>
<div class="cell" style="left:90px;top:108px;background:#405800;color:#ffe0d0;font-size:11.5px">2</div>
<div class="cell" style="left:126px;top:108px;background:#300000;color:#ffe0d0;font-size:11.5px">2</div>
<div class="cell" style="left:144px;top:108px;background:#300000;color:#ffe0d0;font-size:11.5px">2</div>
<div class="cell" style="left:162px;top:108px;background:#300000;color:#ffe0d0;font-size:11.5px">2</div>
<div class="cell" style="left:180px;top:108px;background:#680068;color:#ffe0d0;font-size:11.5px">1</div>
<div class="cell" style="left:198px;top:108px;background:#300000;color:#ffe0d0;font-size:11.5px">2</div>
<div class="cell" style="left:216px;top:108px;background:#300000;color:#ffe0d0;font-size:11.5px">2</div>
<div class="cell" style="left:234px;top:108px;background:#300000;color:#ffe0d0;font-size:11.5px">2</div>
<div class="cell" style="left:252px;top:108px;background:#300000;color:#ffe0d0;font-size:11.5px">2</div>
<div class="cell" style="left:270px;top:108px;background:#300000;color:#ffe0d0;font-size:11.5px">2</div>
<div class="cell" style="left:288px;top:108px;background:#384800;color:#ffe0d0;font-size:11.5px">1</div>
<div class="cell" style="left:306px;top:108px;background:#300000;color:#ffe0d0;font-size:11.5px">2</div>
<div class="cell" style="left:324px;top:108px;background:#300000;color:#ffe0d0;font-size:11.5px">2</div>
<div class="cell" style="left:342px;top:108px;background:#300000;color:#ffe0d0;font-size:11.5px">2</div>
<div class="cell" style="left:360px;top:108px;background:#300000;color:#ffe0d0;font-size:11.5px">2</div>
<div class="cell" style="left:378px;top:108px;background:#300000;color:#ffe0d0;font-size:11.5px">2</div>
<div class="cell" style="left:396px;top:108px;background:#300000;color:#ffe0d0;font-size:11.5px">2</div>
<div class="cell" style="left:414px;top:108px;background:#300000;color:#ffe0d0;font-size:11.5px">2</div>
<div class="cell" style="left:432px;top:108px;background:#300000;color:#ffe0d0;font-size:11.5px">2</div>
<div class="cell" style="left:450px;top:108px;background:#300000;color:#ffe0d0;font-size:11.5px">2</div>
<div class="cell" style="left:468px;top:108px;background:#300000;color:#ffe0d0;font-size:11.5px">2</div>
<div class="cell" style="left:108px;top:108px;background:#ff5820"></div><svg class="abs" style="left:108px;top:108px" width="18" height="18"><path d="M0 0L18 18" stroke="#ff0000" stroke-width="1.300"/></svg>
</div>
<div class="abs" style="left:749px;top:98px;width:20px;height:245px;background:#e9e9ed"></div>
<div class="abs" style="left:754px;top:113px;width:11px;height:100px;background:#cdcdd3"></div>
<svg class="abs" style="left:754px;top:102px" width="11" height="7"><path d="M0.300 6L5.500 0.500L10.700 6z" fill="#8a8a9e"/></svg><svg class="abs" style="left:754px;top:332px" width="11" height="7"><path d="M0.300 1L5.500 6.500L10.700 1z" fill="#8a8a9e"/></svg>
<div class="abs" style="left:260px;top:0;width:3px;height:343px;background:#000"></div>
<div class="abs" style="left:0;top:95px;width:810px;height:3px;background:#000"></div>
</div>
<svg class="abs" style="left:335px;top:66px" width="71" height="51" viewBox="335.5 66 71 51"><defs><linearGradient id="cg337" x1="0" y1="0" x2="0.300" y2="1"><stop offset="0" stop-color="#fff0dc"/><stop offset="0.400" stop-color="#ffcc98"/><stop offset="0.750" stop-color="#ffa850"/><stop offset="1" stop-color="#ff9a38"/></linearGradient></defs><path d="M344.5 68 h53 a7 7 0 0 1 7 7 v14.5 a7 7 0 0 1 -7 7 H383.5 V115.5 L364.5 96.5 H344.5 a7 7 0 0 1 -7 -7 v-14.5 a7 7 0 0 1 7 -7 z" fill="url(#cg337)" stroke="#000" stroke-width="1"/></svg>
<div class="ns" style="left:345px;top:75px;">{}</div><div class="abs" style="left:365px;top:73.500px;font-size:13px;font-weight:bold;line-height:18px;letter-spacing:-0.200px">Poco</div>
<svg class="abs" style="left:0px;top:235px" width="71" height="52" viewBox="-0.5 235.5 71 52"><defs><linearGradient id="cg1" x1="0" y1="0" x2="0.300" y2="1"><stop offset="0" stop-color="#fff0dc"/><stop offset="0.400" stop-color="#ffcc98"/><stop offset="0.750" stop-color="#ffa850"/><stop offset="1" stop-color="#ff9a38"/></linearGradient></defs><path d="M8.5 237.5 h53 a7 7 0 0 1 7 7 v15 a7 7 0 0 1 -7 7 H56.5 V286 L36 266.5 H8.5 a7 7 0 0 1 -7 -7 v-15 a7 7 0 0 1 7 -7 z" fill="url(#cg1)" stroke="#000" stroke-width="1"/></svg>
<div class="ns" style="left:9px;top:245px;">{}</div><div class="abs" style="left:28.500px;top:243.500px;font-size:13px;font-weight:bold;line-height:18px;letter-spacing:-0.200px">Poco</div>
<div class="abs" style="left:0;top:424px;width:810px;height:20px;background:#dcdcdc;border-top:1px solid #ebebeb"></div>
<div class="abs" style="left:5px;top:424.5px;width:78px;height:19px;border:1px solid #f8f8f8;border-radius:3px;box-shadow:0 0 0 1px #cfcfcf;background:linear-gradient(#f1f1f1,#e9e9e9)"></div><svg class="abs" style="left:8px;top:427px" width="16" height="14" viewBox="0 0 16 14"><path d="M1.500 8.500a6.500 6.500 0 0 1 13 0q0 3.800-2.500 3.800h-8q-2.500 0-2.500-3.800z" fill="#fff" stroke="#222" stroke-width="1.500"/><path d="M7.500 10.300L9.600 4.300" stroke="#111" stroke-width="1.700"/><path d="M3.300 8.300h1.500M4.600 4.800l1 1M12.700 8.300h-1.500M11.700 5.200l-0.800 0.800M8 3v1.200" stroke="#333" stroke-width="1"/></svg><div class="abs" style="left:27px;top:428px;font-size:11px;letter-spacing:-0.050px;line-height:14px;white-space:pre;color:#000">Dashboard</div>
<div class="abs" style="left:86px;top:424px;width:122px;height:20px;border:1px solid #f8f8f8;border-radius:3px;box-shadow:0 0 0 1px #cfcfcf;background:linear-gradient(#ffffff,#fdfdfd)"></div><svg class="abs" style="left:90px;top:427px" width="17" height="16" viewBox="0 0 17 16" shape-rendering="crispEdges"><rect x="0" y="4" width="16" height="11" fill="#fff"/><path d="M0.500 6.500h15.500M0.500 8.500h15.500M0.500 10.500h15.500M0.500 12.500h15.500M0.500 14.500h15.500M0.500 4v11M2.500 4v11M7.500 0v15M9.500 0v15M11.500 0v15M13.500 0v15M15.500 0v15" stroke="#909090" stroke-width="1" fill="none"/><path d="M5.500 0v15.500M0 4.500h16" stroke="#111" stroke-width="1.400" fill="none"/></svg><div class="abs" style="left:108px;top:428px;font-size:11px;letter-spacing:-0.050px;line-height:14px;white-space:pre;color:#000">Dependency Matrix</div>
<div class="abs" style="left:210px;top:424.5px;width:59px;height:19px;border:1px solid #f8f8f8;border-radius:3px;box-shadow:0 0 0 1px #cfcfcf;background:linear-gradient(#f1f1f1,#e9e9e9)"></div><svg class="abs" style="left:213px;top:428px" width="15" height="14" viewBox="0 0 15 14"><g fill="#333"><rect x="0" y="0" width="4" height="4"/><rect x="5" y="0" width="4" height="4"/><rect x="10" y="0" width="4" height="4"/><rect x="0" y="5" width="4" height="4"/><rect x="5" y="5" width="4" height="4"/><rect x="10" y="5" width="4" height="4"/><rect x="0" y="10" width="4" height="3"/><rect x="5" y="10" width="4" height="3"/><rect x="10" y="10" width="2" height="2"/></g></svg><div class="abs" style="left:232px;top:428px;font-size:11px;letter-spacing:-0.050px;line-height:14px;white-space:pre;color:#000">Metrics</div>
<div class="abs" style="left:274px;top:424.5px;width:112px;height:19px;border:1px solid #f8f8f8;border-radius:3px;box-shadow:0 0 0 1px #cfcfcf;background:linear-gradient(#f1f1f1,#e9e9e9)"></div><svg class="abs" style="left:278px;top:428px" width="15" height="14" viewBox="0 0 15 14"><path d="M1 13v-11.500h12.500v11.500h-5" stroke="#333" stroke-width="1.500" fill="#fff"/><rect x="3.500" y="6.500" width="5.500" height="6.500" fill="#fff" stroke="#333" stroke-width="1.200"/></svg><div class="abs" style="left:296px;top:428px;font-size:11px;letter-spacing:-0.050px;line-height:14px;white-space:pre;color:#000">Project Properties</div>
<div class="abs" style="left:0;top:444px;width:810px;height:149px;background:#f0f0f0"></div>
<div class="abs" style="left:0;top:450px;width:810px;height:2.500px;background:#c8c8c8"></div>
<div class="abs" style="left:0;top:452.500px;width:40px;height:20px;background:linear-gradient(#c2c2c2,#d6d6d6);color:#909090;font-size:11.500px;line-height:19px;padding-left:3px">Queries</div>
<div class="abs" style="left:2px;top:476px;width:38px;height:25.500px;background:linear-gradient(#f6f6f6,#e2e2e2);border-bottom:1px solid #c8c8c8;font-size:12.500px;line-height:25px;padding-left:4.500px;white-space:pre">Create</div>
<div class="abs" style="left:2px;top:501.500px;width:38px;height:92px;background:#fff"></div>
<div class="vd" style="left:12px;top:502px;height:92px;opacity:0.7"></div><div class="hd" style="left:13px;top:510px;width:10px;opacity:0.7"></div><div class="abs" style="left:23px;top:504px;width:12px;height:12px;border:1px solid #8e9aa8;background:linear-gradient(135deg,#dcdcdc,#fff)"></div><svg class="abs" style="left:25px;top:505.5px" width="9" height="9" viewBox="0 0 9 9"><path d="M1 4l2.200 2.800L7.500 1" stroke="#2a4ac8" stroke-width="1.700" fill="none"/></svg><div class="abs" style="left:37px;top:505px;width:10px;height:10px;border-radius:5px;background:#3cb83c"></div>
<div class="hd" style="left:13px;top:525.5px;width:10px;opacity:0.7"></div><div class="abs" style="left:23px;top:519.5px;width:12px;height:12px;border:1px solid #8e9aa8;background:linear-gradient(135deg,#dcdcdc,#fff)"></div><svg class="abs" style="left:25px;top:521px" width="9" height="9" viewBox="0 0 9 9"><path d="M1 4l2.200 2.800L7.500 1" stroke="#2a4ac8" stroke-width="1.700" fill="none"/></svg><svg class="abs" style="left:36.500px;top:522.5px" width="10" height="10" viewBox="0 0 10 10"><path d="M0 9L5 0L10 9z" fill="#f4b428"/></svg>
<div class="hd" style="left:13px;top:541px;width:10px;opacity:0.7"></div><div class="abs" style="left:23px;top:535px;width:12px;height:12px;border:1px solid #8e9aa8;background:linear-gradient(135deg,#dcdcdc,#fff)"></div><svg class="abs" style="left:25px;top:536.5px" width="9" height="9" viewBox="0 0 9 9"><path d="M1 4l2.200 2.800L7.500 1" stroke="#2a4ac8" stroke-width="1.700" fill="none"/></svg><svg class="abs" style="left:36.500px;top:538px" width="10" height="10" viewBox="0 0 10 10"><path d="M0 9L5 0L10 9z" fill="#f4b428"/></svg>
<div class="hd" style="left:13px;top:556.5px;width:10px;opacity:0.7"></div><div class="abs" style="left:23px;top:550.5px;width:12px;height:12px;border:1px solid #8e9aa8;background:linear-gradient(135deg,#dcdcdc,#fff)"></div><svg class="abs" style="left:25px;top:552px" width="9" height="9" viewBox="0 0 9 9"><path d="M1 4l2.200 2.800L7.500 1" stroke="#2a4ac8" stroke-width="1.700" fill="none"/></svg><svg class="abs" style="left:36.500px;top:553.5px" width="10" height="10" viewBox="0 0 10 10"><path d="M0 9L5 0L10 9z" fill="#f4b428"/></svg>
<div class="hd" style="left:13px;top:572px;width:10px;opacity:0.7"></div><div class="abs" style="left:23px;top:566px;width:12px;height:12px;border:1px solid #8e9aa8;background:linear-gradient(135deg,#dcdcdc,#fff)"></div><svg class="abs" style="left:25px;top:567.5px" width="9" height="9" viewBox="0 0 9 9"><path d="M1 4l2.200 2.800L7.500 1" stroke="#2a4ac8" stroke-width="1.700" fill="none"/></svg><div class="abs" style="left:37px;top:567px;width:10px;height:10px;border-radius:5px;background:#3cb83c"></div>
<div class="hd" style="left:13px;top:587.5px;width:10px;opacity:0.7"></div><div class="abs" style="left:23px;top:581.5px;width:12px;height:12px;border:1px solid #8e9aa8;background:linear-gradient(135deg,#dcdcdc,#fff)"></div><svg class="abs" style="left:25px;top:583px" width="9" height="9" viewBox="0 0 9 9"><path d="M1 4l2.200 2.800L7.500 1" stroke="#2a4ac8" stroke-width="1.700" fill="none"/></svg><div class="abs" style="left:37px;top:582.5px;width:10px;height:10px;border-radius:5px;background:#3cb83c"></div>
<div class="abs" style="left:790px;top:452.500px;width:20px;height:18px;background:linear-gradient(#d4d4d4,#a8a8a8)"></div>
<div class="abs" style="left:790px;top:476px;width:20px;height:1px;background:#c4c4c4"></div>
<div class="abs" style="left:790px;top:477px;width:20px;height:26px;background:linear-gradient(#f6f6f6,#e2e2e2);border-bottom:1px solid #b4b4b4"></div>
<div class="abs" style="left:790px;top:503px;width:20px;height:90px;background:#fff"></div>
<div class="abs" style="left:790px;top:510px;width:20px;height:8px;background:#ececf4"></div>
<div class="abs" style="left:790px;top:541px;width:20px;height:1px;background:#e4e4e4"></div><div class="abs" style="left:790px;top:564px;width:20px;height:1px;background:#e4e4e4"></div><div class="abs" style="left:790px;top:588px;width:20px;height:1px;background:#e4e4e4"></div><div class="abs" style="left:784px;top:570px;width:26px;font-size:11px;line-height:14px;color:#223388;white-space:pre"> al</div>
<div class="abs" style="left:40px;top:590px;width:750px;height:3px;background:#fff"></div>
<div class="abs" style="left:39.500px;top:443.800px;width:751px;height:147px;background:#ffffe1;border:1.800px solid #6c6c58" id="tip">
<div class="abs" style="left:6.7px;top:9.4px;width:15px;height:15px;border-radius:8px;background:#1e96e6;color:#fff;font-weight:bold;font-size:12px;line-height:15px;text-align:center">?</div>
<div class="abs" style="left:27.7px;top:9.2px;white-space:pre;font-weight:bold;font-size:13.600px;line-height:16px;color:#dc9656">Context-Sensitive Help</div>
<div class="abs" style="left:270.7px;top:10.4px;width:15px;height:15px;border-radius:8px;background:#1e96e6;color:#fff;font-weight:bold;font-size:12px;line-height:15px;text-align:center;font-family:'Liberation Serif',serif">i</div>
<div class="abs" style="left:292.2px;top:11.4px;white-space:pre;font-size:10.700px;line-height:14px;color:#2a6cb0">Show description of the namespace</div>
<div class="abs" style="left:109.7px;top:35.2px;white-space:pre;font-size:12.300px;line-height:15px;color:#000;letter-spacing:-0.060px">In this row with 27 cells, 4 cells are <b style="color:#2c2c9c">blue</b>, 3 cells are <b style="color:#0a7a0a">green</b> and 19 cells are <b>black</b>.</div>
<div class="abs" style="left:109.7px;top:55.4px;white-space:pre;font-size:12.300px;line-height:15px;color:#000">This means that the namespace <b>Poco</b></div>
<div class="abs" style="left:109.7px;top:70.1px;white-space:pre;font-size:12.300px;line-height:15px;color:#000"><span style="letter-spacing:-0.100px"> - is used by </span><b style="color:#2c2c9c">4 code elements</b><span style="color:#606060"> of the matrix horizontal header,</span></div>
<div class="abs" style="left:109.7px;top:85px;white-space:pre;font-size:12.300px;line-height:15px;color:#000"><span style="letter-spacing:-0.100px"> - is using </span><b style="color:#0a7a0a">3 code elements</b><span style="color:#606060"> of the matrix horizontal header</span></div>
<div class="abs" style="left:109.7px;top:99.7px;white-space:pre;font-size:12.300px;line-height:15px;color:#000"> - and <b style="letter-spacing:0.520px">is mutually dependent with 19 code elements</b><span style="color:#606060"> of the matrix horizontal</span></div>
<div class="abs" style="left:109.7px;top:115.4px;white-space:pre;font-size:12.300px;line-height:15px;color:#000"><span style="color:#606060">header.</span></div>
<div class="abs" style="left:589.7px;top:10.4px;white-space:pre;font-weight:bold;font-size:12px;line-height:14px;color:#b4682c">How to spot on Matrix</div>
<div class="abs" style="left:589.7px;top:23.4px;white-space:pre;font-weight:bold;font-size:12px;line-height:14px;color:#b4682c">code structure patterns</div>
<div class="abs" style="left:591.7px;top:41.4px;white-space:pre;font-size:10.500px;line-height:14px;color:#2a5ea0">Layered Code</div>
<div class="abs" style="left:591.7px;top:56.4px;white-space:pre;font-size:10.500px;line-height:14px;color:#2a5ea0">Dependency Cycle</div>
<div class="abs" style="left:591.7px;top:71.4px;white-space:pre;font-size:10.500px;line-height:14px;color:#2a5ea0">Mutually Dependent</div>
<div class="abs" style="left:591.7px;top:86.4px;white-space:pre;font-size:10.500px;line-height:14px;color:#2a5ea0">High Cohesion - Low Coupling</div>
<div class="abs" style="left:591.7px;top:101.4px;white-space:pre;font-size:10.500px;line-height:14px;color:#2a5ea0">Popular Code Elements</div>
<div class="abs" style="left:591.7px;top:116.4px;white-space:pre;font-size:10.500px;line-height:14px;color:#2a5ea0">Too many Responsibilities</div>
<svg class="abs" style="left:730.2px;top:7.4px" width="11" height="11" viewBox="0 0 11 11"><rect width="11" height="11" fill="#e01010"/><path d="M2.500 2.500l6 6M8.500 2.500l-6 6" stroke="#fff" stroke-width="1.800"/></svg>
<svg class="abs" style="left:6.7px;top:64.4px" width="100" height="45" viewBox="0 0 100 45">
<rect x="2.800" y="21.600" width="26.400" height="20" rx="3.800" fill="#fff" stroke="#111" stroke-width="1.300"/>
<rect x="25.900" y="28.800" width="69.400" height="6.600" fill="#fff" stroke="#111" stroke-width="1.300"/>
<path d="M32.84 28.800v6.600M39.78 28.800v6.600M46.72 28.800v6.600M53.66 28.800v6.600M60.6 28.800v6.600M67.54 28.800v6.600M74.48 28.800v6.600M81.42 28.800v6.600M88.36 28.800v6.600" stroke="#111" stroke-width="1.300"/>
<path d="M45.500 5v4.500q0 4.500-4.500 4.500h-4" stroke="#28b4ff" stroke-width="3.200" fill="none"/><path d="M31.400 14l6.800-5v10z" fill="#28b4ff"/>
<path d="M54 17.500h6q4.500 0 4.500-4.500v-4" stroke="#00d860" stroke-width="3.200" fill="none"/><path d="M64.500 3.300l-5.500 6.400h11z" fill="#00d860"/>
<path d="M88.500 9v7h-7" stroke="#111" stroke-width="3.400" fill="none"/><path d="M88.500 3.300l-5.500 6.400h11z" fill="#111"/><path d="M75.500 16l6.800-5.500v11z" fill="#111"/>
</svg>
</div>
<svg class="abs" style="left:56px;top:458px" width="12" height="19" viewBox="0 0 12 19"><path d="M1 1v14l3.200-3l2.300 5.500l2-0.800l-2.300-5.400h4.300z" fill="#fff" stroke="#000" stroke-width="1"/></svg>
</body></html>
